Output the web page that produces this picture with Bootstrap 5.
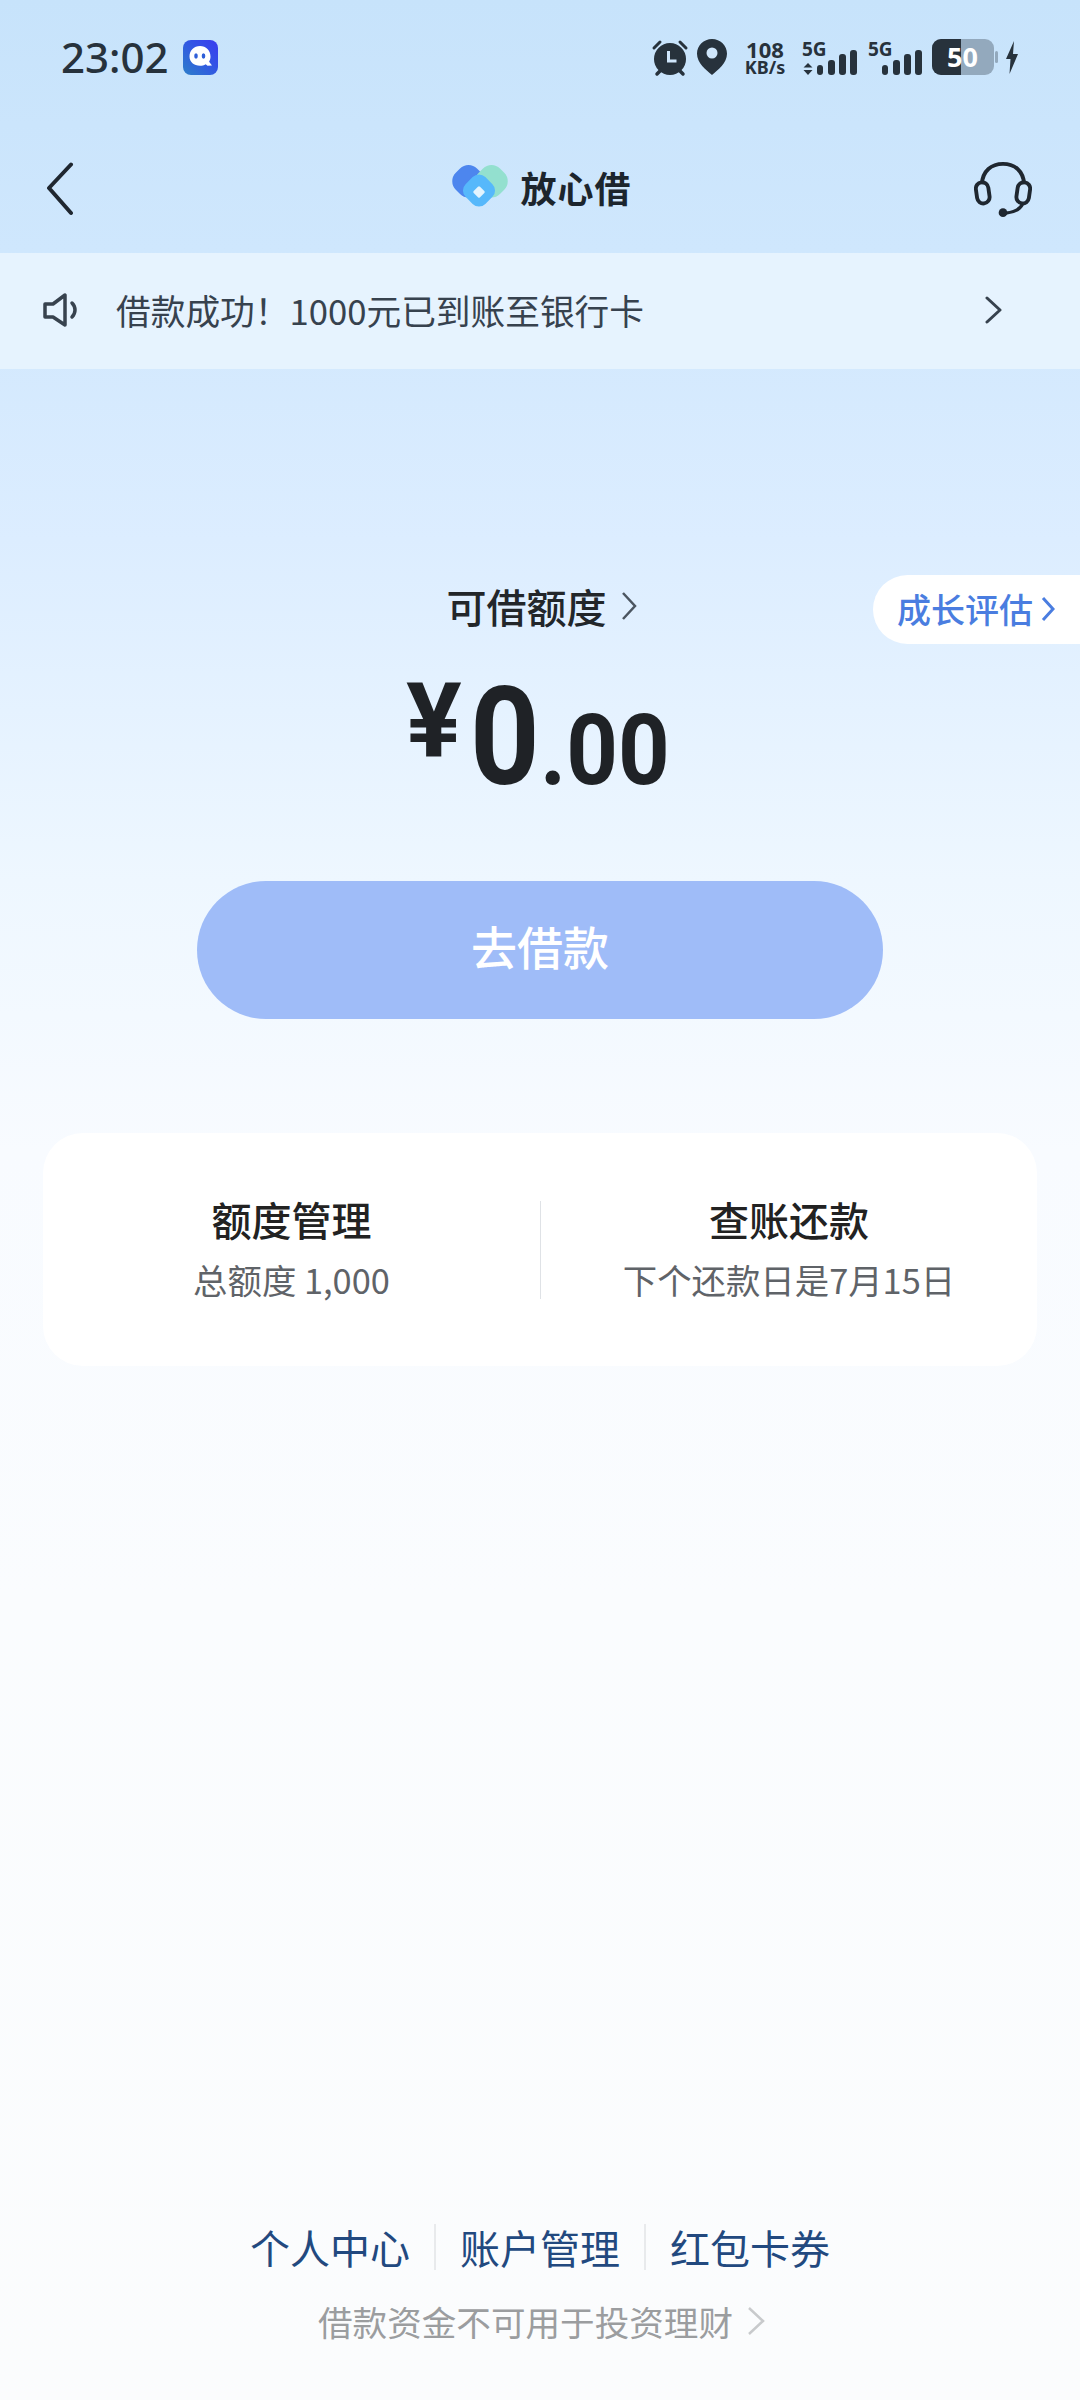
<!DOCTYPE html>
<html lang="zh-CN">
<head>
<meta charset="utf-8">
<title>放心借</title>
<link href="https://cdn.jsdelivr.net/npm/bootstrap@5.3.0/dist/css/bootstrap.min.css" rel="stylesheet">
<style>
html,body{margin:0;padding:0}
body{width:1080px;font-family:"Noto Sans CJK SC","Noto Sans",sans-serif;background:#fff}
.screen{width:1080px;height:2400px;background:linear-gradient(180deg,#c7e3fb 0,#cfe7fd 250px,#dcedff 540px,#eef7ff 880px,#f8fbff 1150px,#fafcfe 1600px,#fbfcfd 2400px)}
.status-row{height:114px;padding:0 62px 0 61px;color:#27323c}
.status-row svg{overflow:visible}
.clock{font-family:"Noto Sans",sans-serif;font-size:42px;font-weight:500;line-height:1;margin-right:14px}
.speed{width:42px;margin:0 16px 0 17px;font-family:"Noto Sans",sans-serif;font-weight:700;text-align:center;line-height:1}
.speed-num{font-size:22px;line-height:20px}
.speed-unit{font-size:18px;line-height:17px;white-space:nowrap;margin:0 -2px}
.sig-txt{font-family:"Noto Sans",sans-serif;font-weight:700;font-size:19px;fill:#27323c}
.batt-txt{font-family:"Noto Sans",sans-serif;font-weight:700;font-size:27px;fill:#fff}
.sig-gap{margin-right:10px}
.nav-row{height:139px;padding:10px 48px 0 46px}
.nav-side{width:140px}
.brand{gap:12px;margin-left:6px;margin-top:-4px}
.brand-name{font-size:36px;font-weight:700;line-height:1;color:#1c252d;letter-spacing:1px}
.notice{height:116px;background:#e6f3fe;padding:0 78px 2px 43px;color:#37424e;font-size:34.7px}
.notice-msg{margin-left:35px;line-height:1}
.hero{position:relative;padding-top:207px}
.quota-label{font-size:40px;font-weight:500;line-height:60px;color:#22262a;gap:14px;padding-left:3px}
.growth{position:absolute;right:0;top:206px;width:207px;height:69px;background:#fff;border-radius:35px 0 0 35px;padding:0 0 2px 24px;color:#4a7de0;font-size:34px;font-weight:500;gap:8px}
.amount{margin-top:9px;height:151px;line-height:151px;color:#1f2226;font-family:Roboto,"Liberation Sans",sans-serif;font-weight:700;white-space:nowrap;text-align:center;padding-right:4px}
.yen{font-size:104px;font-weight:700;vertical-align:28px;margin-right:8px}
.int{display:inline-block;font-size:138px;transform:scaleX(.88);transform-origin:left center;margin-right:-9px}
.dec{display:inline-block;font-size:98px;transform:scaleX(.92);transform-origin:left center;margin-right:-11px}
.go-btn{display:block;width:686px;height:138px;margin:85px auto 0;padding-bottom:16px;background:#9fbcf8;border:0;border-radius:69px;color:#fff;font-size:46px;font-weight:500;line-height:1}
.go-btn:disabled{background:#9fbcf8;color:#fff;opacity:1}
.panel{width:994px;height:233px;margin:114px auto 0;background:#fff;border:0;border-radius:40px}
.cell{width:50%;text-align:center}
.cell + .cell{border-left:1.5px solid #dfe2e6}
.split{height:98px;padding-bottom:3px}
.cell-title{font-size:40px;font-weight:500;line-height:48px;color:#222}
.cell-sub{font-size:34.4px;line-height:44px;color:#5f6368;margin-top:14px}
.foot{padding-bottom:56px}
.foot-links{font-size:40px;line-height:48px;color:#22497f}
.foot-link{padding:0 24px}
.sep{width:2px;height:46px;background:#e8eaec}
.foot-note{margin-top:27px;font-size:34.6px;line-height:46px;color:#9b9d9f;gap:14px;padding-left:3px}
</style>
</head>
<body>
<div class="screen d-flex flex-column">
  <div class="status-row d-flex align-items-center">
    <span class="clock">23:02</span>
    <svg width="35" height="35" viewBox="0 0 35 35"><defs><linearGradient id="qg" x1="0" y1="1" x2="1" y2="0"><stop offset="0" stop-color="#2d7fc9"/><stop offset=".6" stop-color="#3352e6"/><stop offset="1" stop-color="#3a3bef"/></linearGradient></defs><rect width="35" height="35" rx="8" fill="url(#qg)"/><path d="M17 6c6 0 10.500 4.600 10.500 10.500 0 2-.5 3.700-1.400 5.200L29 25.500l-4.500.3-1.800-1.600c-1.700 1-3.600 1.600-5.700 1.600-6 0-10.500-3.800-10.500-9.300C6.500 10.600 11 6 17 6z" fill="#fff"/><ellipse cx="13" cy="16" rx="1.800" ry="2.800" fill="#2f5fd8"/><ellipse cx="20.500" cy="16" rx="1.800" ry="2.800" fill="#2f5fd8"/></svg>
    <div class="ms-auto d-flex align-items-center">
      <svg width="38" height="37" viewBox="0 0 38 37" class="me-2"><circle cx="19" cy="20" r="16" fill="#27323c"/><path d="M3 9l6-6M35 9l-6-6" stroke="#27323c" stroke-width="3" stroke-linecap="round"/><path d="M6 35l4-4M32 35l-4-4" stroke="#27323c" stroke-width="3.500" stroke-linecap="round"/><path d="M17.500 12v10h8" fill="none" stroke="#cfe6fb" stroke-width="3"/></svg>
      <svg width="30" height="36" viewBox="0 0 30 36"><path d="M15 0C6.700 0 0 6.600 0 14.800 0 24 9 31 15 36c6-5 15-12 15-21.200C30 6.600 23.300 0 15 0z" fill="#27323c"/><circle cx="15" cy="14" r="5.500" fill="#cfe6fb"/></svg>
      <div class="speed"><div class="speed-num">108</div><div class="speed-unit">KB/s</div></div>
      <svg width="56" height="36" viewBox="0 0 56 36" class="sig-gap"><text class="sig-txt" x="0" y="17">5G</text><path d="M6 24l-4.500 4.500h9zM6 36l-4.500-5h9z" fill="#27323c"/><rect x="15" y="26" width="6" height="10" rx="3" fill="#27323c"/><rect x="26" y="21" width="7" height="15" rx="3" fill="#27323c"/><rect x="37" y="15" width="7" height="21" rx="3" fill="#27323c"/><rect x="48" y="11" width="7" height="25" rx="3" fill="#27323c"/></svg>
      <svg width="54" height="36" viewBox="0 0 54 36" class="sig-gap"><text class="sig-txt" x="0" y="17">5G</text><rect x="14" y="26" width="6" height="10" rx="3" fill="#27323c"/><rect x="25" y="21" width="7" height="15" rx="3" fill="#27323c"/><rect x="36" y="15" width="7" height="21" rx="3" fill="#27323c"/><rect x="47" y="11" width="7" height="25" rx="3" fill="#27323c"/></svg>
      <svg width="66" height="36" viewBox="0 0 66 36" class="me-2"><rect width="62" height="36" rx="9" fill="#93a9bd"/><path d="M29 0H9a9 9 0 0 0-9 9v18a9 9 0 0 0 9 9h20z" fill="#27323c"/><rect x="63" y="12" width="3" height="12" rx="1.500" fill="#93a9bd"/><text class="batt-txt" x="15" y="28">50</text></svg>
      <svg width="12" height="33" viewBox="0 0 12 33"><path d="M8 0L0 18h4.500L3.500 33 12 13H7z" fill="#27323c"/></svg>
    </div>
  </div>

  <div class="nav-row d-flex align-items-center justify-content-between">
    <div class="nav-side"><svg class="d-block" width="28" height="54" viewBox="0 0 28 54"><path d="M25 2.500L3 26l22 25" fill="none" stroke="#1f2730" stroke-width="4" stroke-linecap="round" stroke-linejoin="round"/></svg></div>
    <div class="brand d-flex align-items-center">
      <svg width="56" height="44" viewBox="0 0 56 44"><rect x="1.500" y="1.250" width="30" height="30" rx="12" transform="rotate(45 16.500 16.250)" fill="#4d86ee"/><rect x="24.500" y="1.250" width="30" height="30" rx="12" transform="rotate(45 39.500 16.250)" fill="#93e0cf"/><rect x="13" y="11.500" width="28" height="28" rx="9" transform="rotate(45 27 25.500)" fill="#56b8fb"/><rect x="22.500" y="22.500" width="9" height="9" rx="1.500" transform="rotate(45 27 27)" fill="#e3f4fe"/></svg>
      <span class="brand-name">放心借</span>
    </div>
    <div class="nav-side d-flex justify-content-end"><svg width="58" height="56" viewBox="0 0 60 58"><path d="M8 24C9 10 18 3 30 3s21 7 22 21" fill="none" stroke="#1f2730" stroke-width="4"/><rect x="2.500" y="22" width="13" height="22" rx="6.500" transform="rotate(-8 9 33)" fill="none" stroke="#1f2730" stroke-width="4"/><rect x="44.500" y="22" width="13" height="22" rx="6.500" transform="rotate(8 51 33)" fill="none" stroke="#1f2730" stroke-width="4"/><path d="M50 45c-3 6-9 8-17 9" fill="none" stroke="#1f2730" stroke-width="3.500"/><circle cx="30" cy="53.500" r="4.500" fill="#1f2730"/></svg></div>
  </div>

  <div class="notice d-flex align-items-center">
    <svg width="38" height="34" viewBox="0 0 38 34"><path d="M2 11h8L22 2v30L10 24H2z" fill="none" stroke="#37424e" stroke-width="3.500" stroke-linejoin="round"/><path d="M29 10c4 4 4 10 0 14" fill="none" stroke="#37424e" stroke-width="3.500" stroke-linecap="round"/></svg>
    <span class="notice-msg">借款成功！1000元已到账至银行卡</span>
    <svg class="ms-auto" width="17" height="28" viewBox="0 0 17 28"><path d="M2 2l13 12L2 26" fill="none" stroke="#37424e" stroke-width="3" stroke-linecap="round" stroke-linejoin="round"/></svg>
  </div>

  <div class="hero">
    <div class="quota-label d-flex justify-content-center align-items-center">
      <span>可借额度</span>
      <svg width="16" height="30" viewBox="0 0 16 30"><path d="M2 2l12 13L2 28" fill="none" stroke="#4b5560" stroke-width="2.500"/></svg>
    </div>
    <div class="growth d-flex align-items-center">
      <span>成长评估</span>
      <svg width="14" height="26" viewBox="0 0 14 26"><path d="M2 2l10 11L2 24" fill="none" stroke="#4a7de0" stroke-width="3"/></svg>
    </div>
    <div class="amount"><span class="yen">¥</span><span class="int">0</span><span class="dec">.00</span></div>
    <button type="button" class="btn go-btn" disabled>去借款</button>
    <div class="card panel flex-row align-items-center">
      <div class="cell split d-flex flex-column justify-content-center">
        <div class="cell-title">额度管理</div>
        <div class="cell-sub">总额度 1,000</div>
      </div>
      <div class="cell split d-flex flex-column justify-content-center">
        <div class="cell-title">查账还款</div>
        <div class="cell-sub">下个还款日是7月15日</div>
      </div>
    </div>
  </div>

  <div class="foot mt-auto">
    <div class="foot-links d-flex justify-content-center align-items-center">
      <span class="foot-link">个人中心</span><span class="sep"></span><span class="foot-link">账户管理</span><span class="sep"></span><span class="foot-link">红包卡券</span>
    </div>
    <div class="foot-note d-flex justify-content-center align-items-center">
      <span>借款资金不可用于投资理财</span>
      <svg width="18" height="30" viewBox="0 0 18 30"><path d="M2 2l14 13L2 28" fill="none" stroke="#c8cacc" stroke-width="2.500"/></svg>
    </div>
  </div>
</div>
<script src="https://cdn.jsdelivr.net/npm/bootstrap@5.3.0/dist/js/bootstrap.bundle.min.js"></script>
</body>
</html>
